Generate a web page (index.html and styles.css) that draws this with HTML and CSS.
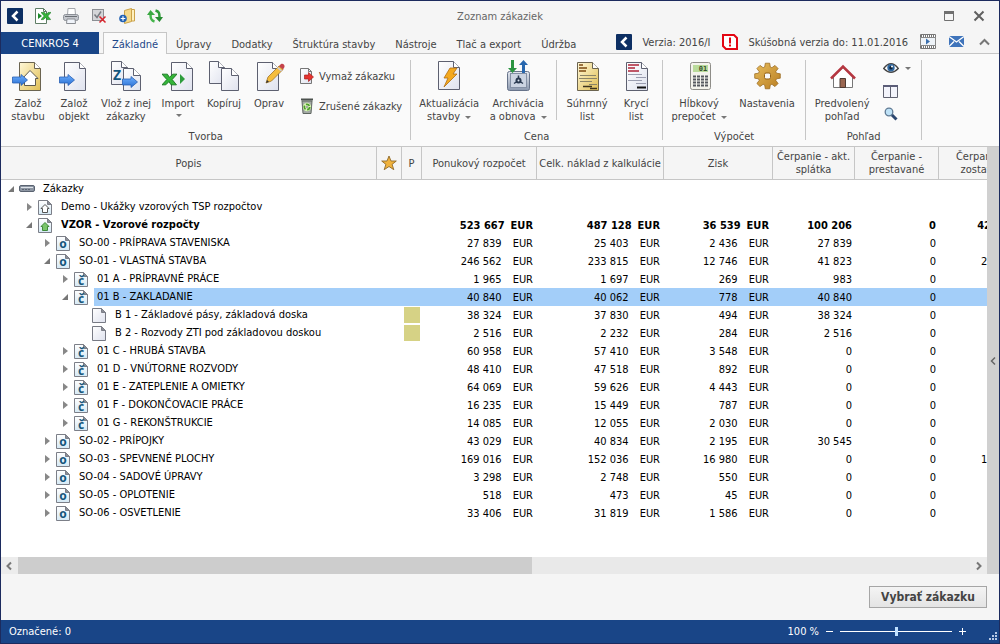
FILE: index.html
```
<!DOCTYPE html>
<html lang="sk">
<head>
<meta charset="utf-8">
<title>Zoznam zákaziek</title>
<link rel="stylesheet" href="styles.css">
</head>
<body>
<svg class="defs" aria-hidden="true">
  <defs>
    <linearGradient id="g-page" x1="0" y1="0" x2="1" y2="1"><stop offset="0" stop-color="#fff"/><stop offset="1" stop-color="#dfe2ee"/></linearGradient>
    <linearGradient id="g-gold" x1="0" y1="0" x2="1" y2="1"><stop offset="0" stop-color="#fff8d8"/><stop offset="1" stop-color="#e0bf55"/></linearGradient>
    <linearGradient id="g-blue" x1="0" y1="0" x2="0" y2="1"><stop offset="0" stop-color="#6eb0ff"/><stop offset="1" stop-color="#2a6fd2"/></linearGradient>
    <linearGradient id="g-gear" x1="0" y1="0" x2="1" y2="1"><stop offset="0" stop-color="#e8bd5c"/><stop offset="1" stop-color="#b87d22"/></linearGradient>
    <linearGradient id="g-box" x1="0" y1="0" x2="0" y2="1"><stop offset="0" stop-color="#e4e8f0"/><stop offset="1" stop-color="#8b98ae"/></linearGradient>
    <linearGradient id="g-doc" x1="0" y1="0" x2="0" y2="1"><stop offset="0" stop-color="#fff"/><stop offset="1" stop-color="#d5e9f5"/></linearGradient>
    <symbol id="page" viewBox="0 0 22 29"><path d="M.5.5h15l6 6v22H.5z" fill="url(#g-page)" stroke="#5d6070"/><path d="M15.500.5v6h6" fill="#fff" stroke="#5d6070"/></symbol>
    <symbol id="goldpage" viewBox="0 0 22 29"><path d="M.5.5h15l6 6v22H.5z" fill="url(#g-gold)" stroke="#6b6450"/><path d="M15.500.5v6h6" fill="#fff" stroke="#6b6450"/></symbol>
    <symbol id="arrow" viewBox="0 0 16 12"><path d="M.5 3h8.500V.5l6.500 5.500L9 11.500V9H.5z" fill="url(#g-blue)" stroke="#2860b4" stroke-width=".8"/></symbol>
    <symbol id="excel" viewBox="0 0 14 12"><path d="M0 1h5l2 3 3-3h4L9.500 6l4 5H8.500L6.500 8l-3 3H0l4.500-5z" fill="#35b53a" stroke="#12701a" stroke-width=".8"/></symbol>
    <symbol id="doc" viewBox="0 0 14 15"><path d="M.5.5h9l4 4v10H.5z" fill="url(#g-doc)" stroke="#7c7f88"/><path d="M9.500.5v4h4z" fill="#8b8e97" stroke="#7c7f88"/></symbol>
    <symbol id="i-root" viewBox="0 0 16 16"><rect x=".5" y="4.500" width="15" height="6" rx="1.500" fill="#8d96a3" stroke="#596270"/><path d="M2 6.500h12" stroke="#dfe4ea"/><path d="M3 8.500h8" stroke="#5d6673" stroke-dasharray="2 1"/></symbol>
    <symbol id="i-house" viewBox="0 0 16 16"><use href="#doc" x="1" y="1" width="14" height="15"/><path d="M4 9.500L8 5.500l4 4h-1.500v4h-5v-4z" fill="#fff" stroke="#555"/></symbol>
    <symbol id="i-green" viewBox="0 0 16 16"><use href="#doc" x="1" y="1" width="14" height="15"/><path d="M4 9.500L8 5.500l4 4h-1.500v4h-5v-4z" fill="#78c56b" stroke="#3f8a39"/></symbol>
    <symbol id="i-o" viewBox="0 0 16 16"><use href="#doc" x="1" y="1" width="14" height="15"/><text x="8" y="13" class="glyph">o</text></symbol>
    <symbol id="i-c" viewBox="0 0 16 16"><use href="#doc" x="1" y="1" width="14" height="15"/><text x="8" y="14" class="glyph">č</text></symbol>
    <symbol id="i-blank" viewBox="0 0 16 16"><path d="M1.500 1.500h9l4 4v10h-13z" fill="url(#g-page)" stroke="#777a84"/><path d="M10.500 1.500v4h4z" fill="#8b8e97" stroke="#7c7f88"/></symbol>
    <symbol id="i-logo" viewBox="0 0 16 16"><rect width="16" height="16" rx="1" fill="#0d2f63"/><path d="M10.500 3.500L6 8l4.500 4.500" fill="none" stroke="#fff" stroke-width="2.500"/></symbol>
  </defs>
</svg>

<header class="titlebar">
  <nav class="quick" aria-label="Rýchly prístup">
    <button aria-label="Menu"><svg viewBox="0 0 16 16"><use href="#i-logo"/></svg></button>
    <button aria-label="Excel"><svg viewBox="0 0 16 16"><path d="M.5.5h8l3 3v12H.5z" fill="#fff" stroke="#5f7d65"/><path d="M8.500.5v3h3" fill="none" stroke="#5f7d65"/><path d="M3 5l4 3-4 3z" fill="#1c8a2a"/><use href="#excel" x="6" y="3" width="10" height="10"/></svg></button>
    <button aria-label="Tlač"><svg viewBox="0 0 16 16"><path d="M4.500 7L5 .5h7l.5 6.500" fill="#fff" stroke="#a5a8ad"/><rect x=".5" y="6.500" width="15" height="6" rx="2" fill="#c3c6cc" stroke="#8b8f96"/><path d="M2 8.500h12" stroke="#6b6f75"/><path d="M4 11h8l.5 4.500h-9z" fill="#f0f4fa" stroke="#8a8d92"/></svg></button>
    <button aria-label="Zrušiť výber"><svg viewBox="0 0 16 16"><rect x="1.500" y="1.500" width="11" height="11" fill="#d4d5d8" stroke="#8c8e93"/><path d="M3.500 6.500l2.500 3 4-6" fill="none" stroke="#777a80" stroke-width="1.500"/><path d="M8.500 8.500l6 6M14.500 8.500l-6 6" stroke="#d8242c" stroke-width="1.500"/></svg></button>
    <button aria-label="Nový priečinok"><svg viewBox="0 0 16 16"><path d="M5.500 2.500l7-2v13l-7 2z" fill="#f6d98a" stroke="#caa24a"/><path d="M12.500 1.500h3v11.500h-3z" fill="#fff0bd" stroke="#caa24a"/><circle cx="4" cy="10.500" r="3.800" fill="#2463b4"/><path d="M4 8.200v4.600M1.700 10.500h4.600" stroke="#fff" stroke-width="1.200"/></svg></button>
    <button aria-label="Obnoviť"><svg viewBox="0 0 16 16"><path d="M3.500 6.500c0 4 .5 6 4 7" fill="none" stroke="#44b54b" stroke-width="2.500"/><path d="M0 7l3.500-5L8 7z" fill="#3aa842"/><path d="M12.500 9c0-4-.5-5.500-4-6.500" fill="none" stroke="#319d3b" stroke-width="2.500"/><path d="M8 9l4.500 5L16 9z" fill="#278c32"/></svg></button>
  </nav>
  <h1 class="title">Zoznam zákaziek</h1>
  <div class="wincontrols">
    <button aria-label="Maximalizovať"><svg viewBox="0 0 16 16"><path d="M3.500 3.500h9v9h-9z" fill="none" stroke="#707070"/><path d="M3 4.500h10" stroke="#707070" stroke-width="3"/></svg></button>
    <button aria-label="Zavrieť"><svg viewBox="0 0 16 16"><path d="M3.500 3.500l9 9M12.500 3.500l-9 9" stroke="#606060" stroke-width="2"/></svg></button>
  </div>
</header>

<div class="tabbar">
  <button class="apptab">CENKROS 4</button>
  <nav class="tabs">
    <button class="tab active">Základné</button>
    <button class="tab">Úpravy</button>
    <button class="tab">Dodatky</button>
    <button class="tab">Štruktúra stavby</button>
    <button class="tab">Nástroje</button>
    <button class="tab">Tlač a export</button>
    <button class="tab">Údržba</button>
  </nav>
  <div class="versions">
    <svg viewBox="0 0 16 16"><use href="#i-logo"/></svg>
    <span class="version">Verzia: 2016/I</span>
    <svg viewBox="0 0 16 16"><path d="M3 1h9l3 3v11H4l-3-3V1z" fill="#fff" stroke="#e30613" stroke-width="2"/><path d="M8 3.500v6" stroke="#e30613" stroke-width="2"/><path d="M8 10.500v2" stroke="#e30613" stroke-width="2"/></svg>
    <span class="trial">Skúšobná verzia do: 11.01.2016</span>
    <button aria-label="Video"><svg viewBox="0 0 16 16"><path d="M.5.5h15v14H.5z" fill="#fff" stroke="#777"/><path d="M1 2h14M1 13h14" stroke="#777" stroke-width="2" stroke-dasharray="1 1"/><path d="M.5 3.500h15v8H.5z" fill="#eef3f8" stroke="#888"/><path d="M6 4.500l4 3-4 3z" fill="#3b6fae"/></svg></button>
    <button aria-label="E-mail"><svg viewBox="0 0 16 16"><rect x="1" y="2" width="15" height="11" fill="#3f74bb"/><path d="M1 2.500l7.500 5.500L16 2.500M1 12.500l5-5M16 12.500l-5-5" fill="none" stroke="#fff" stroke-width="1.300"/></svg></button>
    <button aria-label="Zbaliť"><svg viewBox="0 0 16 16"><path d="M4 10.500l4.500-4.500 4.500 4.500" fill="none" stroke="#777" stroke-width="2"/></svg></button>
  </div>
</div>

<div class="ribbon">
  <section class="group">
    <div class="tools create">
      <button class="big"><svg viewBox="0 0 32 32"><use href="#goldpage" x="7" y="2" width="22" height="29"/><path d="M10.500 18.500l7.500-8 8 8h-2.500v7h-11v-7z" fill="#fff" stroke="#5d5a50"/><use href="#arrow" x="0" y="14" width="16" height="12"/></svg><span>Založ<br>stavbu</span></button>
      <button class="big"><svg viewBox="0 0 32 32"><use href="#page" x="6" y="2" width="22" height="29"/><use href="#arrow" x="1" y="14" width="16" height="12"/></svg><span>Založ<br>objekt</span></button>
      <button class="big"><svg viewBox="0 0 32 32"><path d="M1.500 1.500h10l6 6v17h-16z" fill="url(#g-page)" stroke="#5d6070"/><path d="M11.500 1.500v6h6" fill="#fff" stroke="#5d6070"/><path d="M13.500 8.500h10l7 7v15h-17z" fill="url(#g-page)" stroke="#5d6070"/><path d="M23.500 8.500v7h7" fill="#fff" stroke="#5d6070"/><text x="7" y="20" class="glyph zet">Z</text><use href="#arrow" x="12" y="16" width="16" height="12"/></svg><span>Vlož z inej<br>zákazky</span></button>
      <button class="big"><svg viewBox="0 0 32 32"><use href="#page" x="9" y="2" width="22" height="29"/><use href="#excel" x="0" y="13" width="15" height="13"/><path d="M18 14l5 5-5 5z" fill="#2d9c3c"/></svg><span>Import</span><i class="caret"></i></button>
      <button class="big"><svg viewBox="0 0 32 32"><path d="M1.500 1.500h9l6 6v16h-15z" fill="url(#g-page)" stroke="#5d6070"/><path d="M10.500 1.500v6h6" fill="#fff" stroke="#5d6070"/><path d="M13.500 8.500h10l7 7v15h-17z" fill="url(#g-page)" stroke="#5d6070"/><path d="M23.500 8.500v7h7" fill="#fff" stroke="#5d6070"/></svg><span>Kopíruj</span></button>
      <button class="big"><svg viewBox="0 0 32 32"><use href="#page" x="4" y="2" width="22" height="29"/><path d="M13 23l2-6L26 6l4 3.500L18.500 21z" fill="#f5bd3d" stroke="#a0732a" stroke-width=".8"/><path d="M13 23l1-3 2 1.800z" fill="#333"/><path d="M26 6l2-2c2-1 4 1 3.500 3L30 9.500z" fill="#c4424a"/><path d="M24.500 7.500l4 3.500" stroke="#ccd" stroke-width="1.500"/></svg><span>Oprav</span></button>
      <div class="stack">
        <button class="small"><svg viewBox="0 0 16 16"><path d="M1.500.5h8l3 3v12h-11z" fill="url(#g-page)" stroke="#777"/><path d="M9.500.5v3h3" fill="none" stroke="#777"/><path d="M5.500 7h4V4.500l5 4.500-5 4.500V11h-4z" fill="#e5322e" stroke="#a81f1c" stroke-width=".7"/></svg>Vymaž zákazku</button>
        <button class="small"><svg viewBox="0 0 16 16"><path d="M3 3h10l-1 12.500H4z" fill="#a4aaa5" stroke="#5f6661"/><path d="M2 1.500h12" stroke="#4c524e" stroke-width="2"/><circle cx="8" cy="9" r="2.700" fill="none" stroke="#d7f3b4" stroke-width="3"/><circle cx="8" cy="9" r="2.700" fill="none" stroke="#4c9c2b" stroke-width="1.700" stroke-dasharray="4 1.650"/></svg>Zrušené zákazky</button>
      </div>
    </div>
    <h2>Tvorba</h2>
  </section>
  <section class="group">
    <div class="tools price">
      <button class="big"><svg viewBox="0 0 32 32"><use href="#page" x="5" y="1" width="22" height="29"/><path d="M17 8h7l-4 6h4L11 27l4-9h-4z" fill="#f4a91f" stroke="#b06d12" stroke-width=".8"/></svg><span>Aktualizácia<br>stavby <i class="caret"></i></span></button>
      <button class="big"><svg viewBox="0 0 32 32"><rect x="5.500" y="11.500" width="22" height="19" rx="2" fill="url(#g-box)" stroke="#67738a"/><rect x="8.500" y="13.500" width="16" height="14" fill="#ccd4e2" stroke="#8490a5"/><circle cx="16.500" cy="20.500" r="3" fill="#2a3950"/><path d="M16.500 20.500v-5M16.500 20.500l4.500 3M16.500 20.500l-4.500 3" stroke="#2a3950" stroke-width="1.500"/><circle cx="16.500" cy="20.500" r="1" fill="#dce4ef"/><path d="M9 0h3v8h3l-4.500 5L6 8h3z" fill="#2b9441"/><path d="M20 13h3V5h3l-4.500-5L17 5h3z" fill="#2867ae"/></svg><span>Archivácia<br>a obnova <i class="caret"></i></span></button>
      <div class="rule"></div>
      <button class="big"><svg viewBox="0 0 32 32"><use href="#goldpage" x="6" y="2" width="22" height="29"/><path d="M8 5h4M8 8h8M8 11h7" stroke="#7c4a12" stroke-width="1.400"/><path d="M9 15.500h16M8 18.500h18M9 21.500h12M18 24.500h8" stroke="#8a8468"/><path d="M12 26.500h9M19 28.500h7" stroke="#3c3420" stroke-width="1.500"/></svg><span>Súhrnný<br>list</span></button>
      <button class="big"><svg viewBox="0 0 32 32"><use href="#page" x="6" y="2" width="22" height="29"/><path d="M8 5h11M8 8h7M8 11h11" stroke="#ad2339" stroke-width="1.300"/><path d="M8 14.500h14M16 17.500h10M8 20.500h14M16 23.500h10" stroke="#9a9daf"/><path d="M17 27.500h9" stroke="#111" stroke-width="2"/></svg><span>Krycí<br>list</span></button>
    </div>
    <h2>Cena</h2>
  </section>
  <section class="group">
    <div class="tools calc">
      <button class="big"><svg viewBox="0 0 32 32"><rect x="7.500" y="2.500" width="20" height="27" rx="2" fill="#f4f3ec" stroke="#8e8d88"/><rect x="10" y="5" width="15" height="7" fill="#badb9b"/><text x="20" y="11" class="lcd">01</text><path d="M10 16.500h15M10 19.500h15M10 22.500h15M10 25.500h15" stroke="#55585e" stroke-width="2" stroke-dasharray="3 1"/></svg><span>Hĺbkový<br>prepočet <i class="caret"></i></span></button>
      <button class="big"><svg viewBox="0 0 32 32"><g transform="translate(16.500 16)" fill="#d3a044" stroke="#946215" stroke-width=".7"><path d="M-2.800-9L-2.200-12.800H2.200L2.800-9 4.400-8.300 7.500-10.600 10.600-7.500 8.300-4.400 9-2.800 12.800-2.200V2.200L9 2.800 8.300 4.400 10.600 7.500 7.500 10.600 4.400 8.300 2.800 9 2.200 12.800H-2.200L-2.800 9-4.400 8.300-7.500 10.600-10.600 7.500-8.300 4.400-9 2.800-12.800 2.200V-2.200L-9-2.800-8.300-4.400-10.600-7.500-7.500-10.600-4.400-8.300z" fill="url(#g-gear)" stroke-linejoin="round"/></g><rect x="13.500" y="13" width="6" height="6" rx="1.500" fill="#fafafa" stroke="#946215"/></svg><span>Nastavenia</span></button>
    </div>
    <h2>Výpočet</h2>
  </section>
  <section class="group">
    <div class="tools view">
      <button class="big"><svg viewBox="0 0 32 32"><path d="M7.500 16v11.500h19V16L17 7.500z" fill="#fff" stroke="#777"/><path d="M14 18.500h5.500v9H14z" fill="#9a6650" stroke="#4e3a32"/><path d="M5 18.500L17 6.500l12 12" fill="none" stroke="#b53640" stroke-width="2.500"/></svg><span>Predvolený<br>pohľad</span></button>
      <div class="stack icons">
        <button class="small" aria-label="Zobraziť"><svg viewBox="0 0 16 16"><path d="M.7 8.500Q8-1 15.300 8.500 8 16 .7 8.500z" fill="#fff" stroke="#444" stroke-width="1.300"/><circle cx="8" cy="7.800" r="3.700" fill="#2f679f"/><circle cx="8" cy="7.800" r="1.700" fill="#0d2238"/><circle cx="9" cy="6.500" r="1" fill="#fff"/></svg><i class="caret"></i></button>
        <button class="small" aria-label="Rozdeliť"><svg viewBox="0 0 16 16"><path d="M.5 2.500h14v12H.5zM7.500 2v12" fill="#f3f4fb" stroke="#606270"/><path d="M0 3h15" stroke="#5b5d78" stroke-width="2"/></svg></button>
        <button class="small" aria-label="Hľadať"><svg viewBox="0 0 16 16"><path d="M8 8l5.500 5.500" stroke="#2c4770" stroke-width="3"/><circle cx="6" cy="6" r="3.800" fill="#bfe2f7" stroke="#5e7993" stroke-width="1.300"/></svg></button>
      </div>
    </div>
    <h2>Pohľad</h2>
  </section>
</div>

<main class="workspace">
  <div class="gridpane">
    <div class="gridview">
      <table>
        <colgroup><col class="c-name"><col class="c-star"><col class="c-p"><col class="c-offer"><col class="c-cost"><col class="c-profit"><col class="c-draw"><col class="c-built"><col class="c-rest"></colgroup>
        <thead><tr><th>Popis</th><th aria-label="Obľúbené"><svg viewBox="0 0 16 16"><path d="M8 1l2 5h5.300l-4.200 3.400 1.700 5.300L8 11.500l-4.800 3.200 1.700-5.300L.7 6H6z" fill="#f0b23c" stroke="#8e6a2b" stroke-width=".9"/></svg></th><th>P</th><th>Ponukový rozpočet</th><th>Celk. náklad z kalkulácie</th><th>Zisk</th><th>Čerpanie - akt.<br>splátka</th><th>Čerpanie -<br>prestavané</th><th>Čerpanie -<br>zostatok</th></tr></thead>
        <tbody>
          <tr><td><div class="node l0"><i class="open"></i><svg viewBox="0 0 16 16"><use href="#i-root"/></svg><span>Zákazky</span></div></td><td></td><td></td><td></td><td></td><td></td><td></td><td></td><td></td></tr>
          <tr><td><div class="node l1"><i class="closed"></i><svg viewBox="0 0 16 16"><use href="#i-house"/></svg><span>Demo - Ukážky vzorových TSP rozpočtov</span></div></td><td></td><td></td><td></td><td></td><td></td><td></td><td></td><td></td></tr>
          <tr class="strong"><td><div class="node l1"><i class="open"></i><svg viewBox="0 0 16 16"><use href="#i-green"/></svg><span>VZOR - Vzorové rozpočty</span></div></td><td></td><td></td><td>523 667<b>EUR</b></td><td>487 128<b>EUR</b></td><td>36 539<b>EUR</b></td><td>100 206</td><td>0</td><td>423 461</td></tr>
          <tr><td><div class="node l2"><i class="closed"></i><svg viewBox="0 0 16 16"><use href="#i-o"/></svg><span>SO-00 - PRÍPRAVA STAVENISKA</span></div></td><td></td><td></td><td>27 839<b>EUR</b></td><td>25 403<b>EUR</b></td><td>2 436<b>EUR</b></td><td>27 839</td><td>0</td><td></td></tr>
          <tr><td><div class="node l2"><i class="open"></i><svg viewBox="0 0 16 16"><use href="#i-o"/></svg><span>SO-01 - VLASTNÁ STAVBA</span></div></td><td></td><td></td><td>246 562<b>EUR</b></td><td>233 815<b>EUR</b></td><td>12 746<b>EUR</b></td><td>41 823</td><td>0</td><td>204 739</td></tr>
          <tr><td><div class="node l3"><i class="closed"></i><svg viewBox="0 0 16 16"><use href="#i-c"/></svg><span>01 A - PRÍPRAVNÉ PRÁCE</span></div></td><td></td><td></td><td>1 965<b>EUR</b></td><td>1 697<b>EUR</b></td><td>269<b>EUR</b></td><td>983</td><td>0</td><td></td></tr>
          <tr class="selected"><td><div class="node l3"><i class="open"></i><svg viewBox="0 0 16 16"><use href="#i-c"/></svg><span>01 B - ZAKLADANIE</span></div></td><td></td><td></td><td>40 840<b>EUR</b></td><td>40 062<b>EUR</b></td><td>778<b>EUR</b></td><td>40 840</td><td>0</td><td></td></tr>
          <tr><td><div class="node l4"><i></i><svg viewBox="0 0 16 16"><use href="#i-blank"/></svg><span>B 1 - Základové pásy, základová doska</span></div></td><td></td><td class="mark"><i></i></td><td>38 324<b>EUR</b></td><td>37 830<b>EUR</b></td><td>494<b>EUR</b></td><td>38 324</td><td>0</td><td></td></tr>
          <tr><td><div class="node l4"><i></i><svg viewBox="0 0 16 16"><use href="#i-blank"/></svg><span>B 2 - Rozvody ZTI pod základovou doskou</span></div></td><td></td><td class="mark"><i></i></td><td>2 516<b>EUR</b></td><td>2 232<b>EUR</b></td><td>284<b>EUR</b></td><td>2 516</td><td>0</td><td></td></tr>
          <tr><td><div class="node l3"><i class="closed"></i><svg viewBox="0 0 16 16"><use href="#i-c"/></svg><span>01 C - HRUBÁ STAVBA</span></div></td><td></td><td></td><td>60 958<b>EUR</b></td><td>57 410<b>EUR</b></td><td>3 548<b>EUR</b></td><td>0</td><td>0</td><td></td></tr>
          <tr><td><div class="node l3"><i class="closed"></i><svg viewBox="0 0 16 16"><use href="#i-c"/></svg><span>01 D - VNÚTORNE ROZVODY</span></div></td><td></td><td></td><td>48 410<b>EUR</b></td><td>47 518<b>EUR</b></td><td>892<b>EUR</b></td><td>0</td><td>0</td><td></td></tr>
          <tr><td><div class="node l3"><i class="closed"></i><svg viewBox="0 0 16 16"><use href="#i-c"/></svg><span>01 E - ZATEPLENIE A OMIETKY</span></div></td><td></td><td></td><td>64 069<b>EUR</b></td><td>59 626<b>EUR</b></td><td>4 443<b>EUR</b></td><td>0</td><td>0</td><td></td></tr>
          <tr><td><div class="node l3"><i class="closed"></i><svg viewBox="0 0 16 16"><use href="#i-c"/></svg><span>01 F - DOKONČOVACIE PRÁCE</span></div></td><td></td><td></td><td>16 235<b>EUR</b></td><td>15 449<b>EUR</b></td><td>787<b>EUR</b></td><td>0</td><td>0</td><td></td></tr>
          <tr><td><div class="node l3"><i class="closed"></i><svg viewBox="0 0 16 16"><use href="#i-c"/></svg><span>01 G - REKONŠTRUKCIE</span></div></td><td></td><td></td><td>14 085<b>EUR</b></td><td>12 055<b>EUR</b></td><td>2 030<b>EUR</b></td><td>0</td><td>0</td><td></td></tr>
          <tr><td><div class="node l2"><i class="closed"></i><svg viewBox="0 0 16 16"><use href="#i-o"/></svg><span>SO-02 - PRÍPOJKY</span></div></td><td></td><td></td><td>43 029<b>EUR</b></td><td>40 834<b>EUR</b></td><td>2 195<b>EUR</b></td><td>30 545</td><td>0</td><td></td></tr>
          <tr><td><div class="node l2"><i class="closed"></i><svg viewBox="0 0 16 16"><use href="#i-o"/></svg><span>SO-03 - SPEVNENÉ PLOCHY</span></div></td><td></td><td></td><td>169 016<b>EUR</b></td><td>152 036<b>EUR</b></td><td>16 980<b>EUR</b></td><td>0</td><td>0</td><td>169 016</td></tr>
          <tr><td><div class="node l2"><i class="closed"></i><svg viewBox="0 0 16 16"><use href="#i-o"/></svg><span>SO-04 - SADOVÉ ÚPRAVY</span></div></td><td></td><td></td><td>3 298<b>EUR</b></td><td>2 748<b>EUR</b></td><td>550<b>EUR</b></td><td>0</td><td>0</td><td></td></tr>
          <tr><td><div class="node l2"><i class="closed"></i><svg viewBox="0 0 16 16"><use href="#i-o"/></svg><span>SO-05 - OPLOTENIE</span></div></td><td></td><td></td><td>518<b>EUR</b></td><td>473<b>EUR</b></td><td>45<b>EUR</b></td><td>0</td><td>0</td><td></td></tr>
          <tr><td><div class="node l2"><i class="closed"></i><svg viewBox="0 0 16 16"><use href="#i-o"/></svg><span>SO-06 - OSVETLENIE</span></div></td><td></td><td></td><td>33 406<b>EUR</b></td><td>31 819<b>EUR</b></td><td>1 586<b>EUR</b></td><td>0</td><td>0</td><td></td></tr>
        </tbody>
      </table>
    </div>
    <div class="hscroll">
      <button aria-label="Doľava"><svg viewBox="0 0 16 16"><path d="M10 4.500L6.500 8l3.500 3.500" fill="none" stroke="#777" stroke-width="2"/></svg></button>
      <div class="track"><div class="thumb"></div></div>
      <button aria-label="Doprava"><svg viewBox="0 0 16 16"><path d="M7 4.500L10.500 8 7 11.500" fill="none" stroke="#777" stroke-width="2"/></svg></button>
    </div>
  </div>
  <button class="sidebar" aria-label="Rozbaliť panel"><svg viewBox="0 0 12 12"><path d="M8 2.500L4.500 6 8 9.500" fill="none" stroke="#666" stroke-width="1.500"/></svg></button>
</main>

<div class="actions"><button class="choose">Vybrať zákazku</button></div>

<footer class="status">
  <span>Označené: 0</span>
  <label class="zoomlabel" for="zoom">100 %</label>
  <button aria-label="Zmenšiť"><svg viewBox="0 0 9 9"><path d="M1 4.500h7" stroke="#fff"/></svg></button>
  <input id="zoom" type="range" min="0" max="200" value="100">
  <button aria-label="Zväčšiť"><svg viewBox="0 0 9 9"><path d="M1 4.500h7M4.500 1v7" stroke="#fff"/></svg></button>
  <svg class="grip" viewBox="0 0 10 10"><path d="M6 0h2v2H6zM3 3h2v2H3zM6 3h2v2H6zM0 6h2v2H0zM3 6h2v2H3zM6 6h2v2H6z" fill="#b7c9e6"/></svg>
</footer>
</body>
</html>
```
FILE: styles.css
```
* { box-sizing: border-box; }
body {
  margin: 0;
  height: 100vh;
  display: flex;
  flex-direction: column;
  overflow: hidden;
  border: 1px solid #1c2b5e;
  background: #f5f5f5;
  color: #444;
  font: 11px/13px "DejaVu Sans Condensed", "Noto Sans", sans-serif;
}
button {
  margin: 0;
  padding: 0;
  border: 0;
  background: none;
  color: inherit;
  font: inherit;
}
svg { display: block; flex: none; width: 16px; height: 16px; }
.defs { position: absolute; width: 0; height: 0; }
.glyph { font: bold 12px "Noto Sans", sans-serif; fill: #14567c; text-anchor: middle; }
.zet { font-size: 14px; }
.lcd { font: bold 7px "DejaVu Sans Mono", monospace; fill: #37502c; text-anchor: middle; }

.titlebar { display: grid; grid-template-columns: 1fr auto 1fr; align-items: center; height: 30px; flex: none; padding: 0 6px; }
.quick { display: flex; gap: 12px; }
.title { margin: 0; font-size: 11px; font-weight: normal; color: #666; }
.wincontrols { display: flex; justify-content: flex-end; gap: 14px; padding-right: 6px; }

.tabbar { display: flex; flex: none; height: 23px; border-bottom: 1px solid #c6c6c6; }
.apptab { width: 98px; height: 22px; margin: 1px 4px 0 0; background: #194587; color: #fff; font-size: 11px; }
.tabs { display: flex; margin-top: 1px; }
.tab { height: 22px; padding: 2px 10px 0; }
.tab.active { padding: 1px 8px 0; margin-right: -1px; border: 1px solid #c6c6c6; border-bottom: 0; background: #fafafa; color: #1d4789; height: 23px; }
.versions { display: flex; align-items: center; margin-left: auto; padding-right: 7px; }
.version { margin: 0 12px 0 10px; }
.trial { margin: 0 12px 0 10px; }
.versions button + button { margin-left: 12px; }

.ribbon { display: flex; flex: none; height: 93px; background: #fafafa; border-bottom: 1px solid #c6c6c6; }
.group { display: flex; flex-direction: column; margin: 6px 0; border-right: 1px solid #c6c6c6; }
.group h2 { margin: 7px 0 0; font-size: 11px; font-weight: normal; text-align: center; }
.tools { display: grid; height: 64px; }
.create { grid-template-columns: 46px 46px 58px 46px 46px 44px auto; padding: 0 8px 0 4px; }
.price { grid-template-columns: 70px 68px 7px 56px 42px; padding: 0 5px 0 3px; }
.calc { grid-template-columns: 72px 64px; padding-right: 6px; }
.view { grid-template-columns: 72px 42px; padding-right: 1px; }
.big { display: flex; flex-direction: column; align-items: center; white-space: nowrap; min-width: 0; }
.big svg { width: 32px; height: 32px; margin-bottom: 5px; }
.big > .caret { margin-top: 4px; }
.caret { display: inline-block; vertical-align: middle; border: 3px solid transparent; border-top-color: #777; border-bottom: 0; margin-left: 2px; }
.rule { width: 1px; height: 60px; margin-left: 4px; background: #c6c6c6; }
.stack { display: flex; flex-direction: column; gap: 14px; padding: 8px 0 0 8px; }
.small { display: flex; align-items: center; gap: 4px; height: 16px; white-space: nowrap; }
.icons { gap: 7px; padding: 0 0 0 5px; }

.workspace { display: flex; flex: 1; min-height: 0; }
.gridpane { display: flex; flex-direction: column; flex: 1; min-width: 0; background: #fff; }
.gridview { flex: 1; min-height: 0; overflow: hidden; }
table { width: 1024px; table-layout: fixed; border-collapse: separate; border-spacing: 0; color: #000; }
.c-name { width: 376px; }
.c-star { width: 25px; }
.c-p { width: 20px; }
.c-offer { width: 115px; }
.c-cost { width: 127px; }
.c-profit { width: 109px; }
.c-draw { width: 82px; }
.c-built { width: 84px; }
th { height: 33px; padding: 0; border-right: 1px solid #c6c6c6; border-bottom: 1px solid #c6c6c6; background: #f5f5f5; color: #444; font-weight: normal; white-space: nowrap; }
th svg { margin: 0 auto; }
td { height: 18px; padding: 0 3px 0 0; text-align: right; white-space: nowrap; }
td:first-child { padding: 0; }
td b { margin: 0 1px 0 11px; font-weight: normal; }
.strong { font-weight: bold; }
.strong td b { margin-left: 6px; font-weight: bold; }
.node { display: grid; grid-template-columns: 12px 16px 1fr; align-items: center; text-align: left; line-height: 18px; }
.node span { margin-left: 5px; padding-left: 3px; }
.l0 { padding-left: 6px; }
.l1 { padding-left: 24px; }
.l2 { padding-left: 42px; }
.l3 { padding-left: 60px; }
.l4 { padding-left: 78px; }
.open { border: 3px solid transparent; border-right-color: #777; border-bottom-color: #777; width: 6px; margin-left: 1px; }
.closed { border: 4px solid transparent; border-left: 5px solid #888; border-right: 0; width: 5px; margin-left: 2px; }
.selected td:not(:first-child), .selected .node span { background: #a3cef9; }
.mark i { display: block; width: 16px; height: 16px; margin-left: 2px; background: #d6d285; }

.hscroll { display: flex; flex: none; height: 17px; background: #ececec; }
.hscroll button { width: 17px; }
.track { flex: 1; background: #e9e9e9; }
.thumb { width: 54%; height: 17px; background: #cdcdcd; }
.sidebar { display: flex; align-items: center; width: 12px; background: #d0d0d0; }
.sidebar svg { width: 12px; height: 12px; }

.actions { display: flex; justify-content: flex-end; align-items: center; flex: none; height: 46px; padding-right: 12px; }
.choose { width: 118px; height: 22px; border: 1px solid #a6a6a6; background: linear-gradient(#f4f4f4, #e4e4e4); font-weight: bold; font-size: 12px; }

.status { display: flex; align-items: center; flex: none; height: 23px; padding-left: 8px; background: #194587; color: #fff; }
.zoomlabel { margin-left: auto; margin-right: 6px; }
.status button svg { width: 9px; height: 9px; }
.status input { appearance: none; width: 112px; height: 12px; margin: 0 6px; background: linear-gradient(#fff, #fff) center / 100% 1px no-repeat; }
.status input::-webkit-slider-thumb { appearance: none; width: 3px; height: 9px; background: #bfe0ff; }
.grip { width: 10px; height: 10px; margin: 10px 0 0 22px; }
```
